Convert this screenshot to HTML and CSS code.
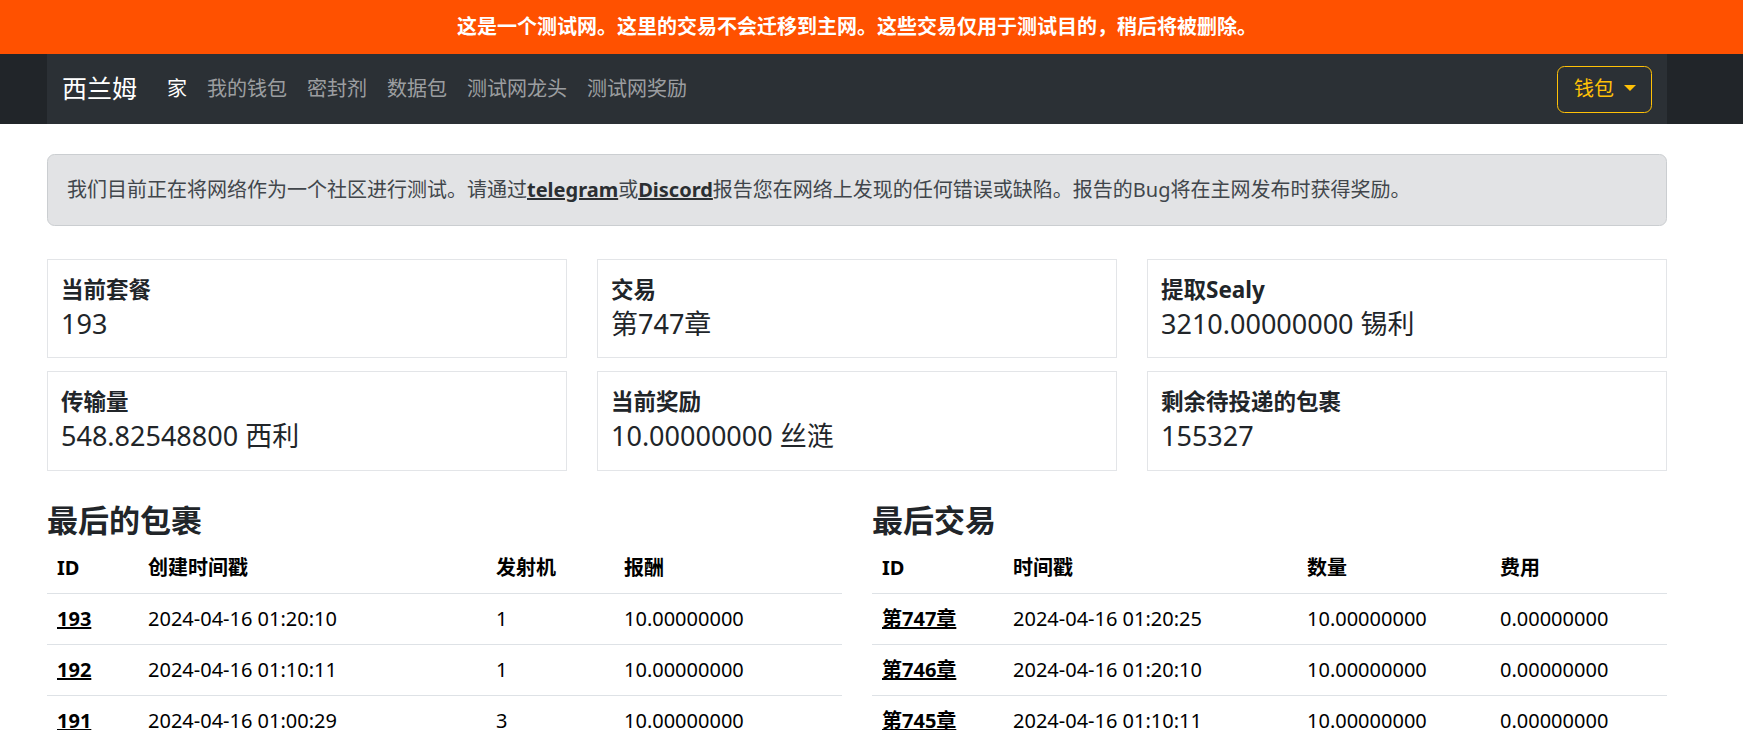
FILE: index.html
```html
<!DOCTYPE html>
<html lang="zh-CN">
<head>
<meta charset="utf-8">
<title>西兰姆</title>
<link rel="stylesheet" href="styles.css">
</head>
<body>
<div class="banner">
  <div class="banner-inner">这是一个测试网。这里的交易不会迁移到主网。这些交易仅用于测试目的，稍后将被删除。</div>
</div>
<nav class="navbar">
  <div class="navbar-inner">
    <a class="brand" href="#">西兰姆</a>
    <ul class="nav">
      <li><a class="nav-link active" href="#">家</a></li>
      <li><a class="nav-link" href="#">我的钱包</a></li>
      <li><a class="nav-link" href="#">密封剂</a></li>
      <li><a class="nav-link" href="#">数据包</a></li>
      <li><a class="nav-link" href="#">测试网龙头</a></li>
      <li><a class="nav-link" href="#">测试网奖励</a></li>
    </ul>
    <button class="wallet-btn" type="button">钱包<span class="caret"></span></button>
  </div>
</nav>
<main class="container">
  <div class="alert">我们目前正在将网络作为一个社区进行测试。请通过<a class="alert-link" href="#">telegram</a>或<a class="alert-link" href="#">Discord</a>报告您在网络上发现的任何错误或缺陷。报告的Bug将在主网发布时获得奖励。</div>

  <div class="stats">
    <div class="stat"><div class="stat-title">当前套餐</div><div class="stat-value">193</div></div>
    <div class="stat"><div class="stat-title">交易</div><div class="stat-value">第747章</div></div>
    <div class="stat"><div class="stat-title">提取Sealy</div><div class="stat-value">3210.00000000 锡利</div></div>
    <div class="stat"><div class="stat-title">传输量</div><div class="stat-value">548.82548800 西利</div></div>
    <div class="stat"><div class="stat-title">当前奖励</div><div class="stat-value">10.00000000 丝涟</div></div>
    <div class="stat"><div class="stat-title">剩余待投递的包裹</div><div class="stat-value">155327</div></div>
  </div>

  <div class="lists">
    <section class="list">
      <h3 class="list-title">最后的包裹</h3>
      <table class="table">
        <colgroup>
          <col class="c-pid"><col class="c-ptime"><col class="c-emit"><col class="c-reward">
        </colgroup>
        <thead>
          <tr><th>ID</th><th>创建时间戳</th><th>发射机</th><th>报酬</th></tr>
        </thead>
        <tbody>
          <tr><td><a class="cell-link" href="#">193</a></td><td>2024-04-16 01:20:10</td><td>1</td><td>10.00000000</td></tr>
          <tr><td><a class="cell-link" href="#">192</a></td><td>2024-04-16 01:10:11</td><td>1</td><td>10.00000000</td></tr>
          <tr><td><a class="cell-link" href="#">191</a></td><td>2024-04-16 01:00:29</td><td>3</td><td>10.00000000</td></tr>
        </tbody>
      </table>
    </section>
    <section class="list">
      <h3 class="list-title">最后交易</h3>
      <table class="table">
        <colgroup>
          <col class="c-tid"><col class="c-ttime"><col class="c-amount"><col class="c-fee">
        </colgroup>
        <thead>
          <tr><th>ID</th><th>时间戳</th><th>数量</th><th>费用</th></tr>
        </thead>
        <tbody>
          <tr><td><a class="cell-link" href="#">第747章</a></td><td>2024-04-16 01:20:25</td><td>10.00000000</td><td>0.00000000</td></tr>
          <tr><td><a class="cell-link" href="#">第746章</a></td><td>2024-04-16 01:20:10</td><td>10.00000000</td><td>0.00000000</td></tr>
          <tr><td><a class="cell-link" href="#">第745章</a></td><td>2024-04-16 01:10:11</td><td>10.00000000</td><td>0.00000000</td></tr>
        </tbody>
      </table>
    </section>
  </div>
</main>
</body>
</html>
```

FILE: styles.css
```css
* {
  box-sizing: border-box;
}

html, body {
  margin: 0;
  padding: 0;
}

body {
  background: #ffffff;
  color: #212529;
  font-family: "Noto Sans", "Noto Sans CJK SC", sans-serif;
  font-size: 20px;
  line-height: 1.5;
}

a {
  text-decoration: none;
}

/* ---------- testnet banner ---------- */
.banner {
  background: #ff5100;
  height: 54px;
  display: flex;
  align-items: center;
}

.banner-inner {
  width: 1620px;
  margin-left: 47px;
  text-align: center;
  color: #ffffff;
  font-weight: 700;
  font-size: 20px;
  line-height: 1;
}

/* ---------- navbar ---------- */
.navbar {
  background: #212529;
}

.navbar-inner {
  width: 1620px;
  margin-left: 47px;
  height: 70px;
  background: #2b3035;
  padding: 0 15px;
  display: flex;
  align-items: center;
}

.brand {
  color: #ffffff;
  font-size: 25px;
  line-height: 1.5;
  margin-right: 20px;
}

.nav {
  list-style: none;
  margin: 0;
  padding: 0;
  display: flex;
  flex: 1;
}

.nav-link {
  display: block;
  padding: 0 10px;
  color: rgba(255, 255, 255, 0.55);
  font-size: 20px;
}

.nav-link.active {
  color: #ffffff;
}

.wallet-btn {
  display: inline-flex;
  align-items: center;
  height: 47px;
  padding: 0 15px 0 16px;
  background: transparent;
  border: 1px solid #ffc107;
  border-radius: 7.5px;
  color: #ffc107;
  font-family: inherit;
  font-size: 20px;
  line-height: 1.5;
}

.caret {
  display: inline-block;
  margin-left: 10px;
  margin-top: -2px;
  width: 0;
  height: 0;
  border-top: 6px solid #ffc107;
  border-left: 6px solid transparent;
  border-right: 6px solid transparent;
}

/* ---------- main ---------- */
.container {
  width: 1620px;
  margin-left: 47px;
  padding-top: 30px;
}

.alert {
  background: #e2e3e5;
  border: 1px solid #cbced1;
  border-radius: 7.5px;
  color: #41464b;
  padding: 20px 19px;
  margin-bottom: 33px;
}

.alert-link {
  color: #2b2f32;
  font-weight: 700;
  text-decoration: underline;
}

/* ---------- stats ---------- */
.stats {
  display: grid;
  grid-template-columns: repeat(3, 1fr);
  column-gap: 30px;
  row-gap: 13px;
}

.stat {
  border: 1px solid #e3e5e8;
  padding: 16px 13px 13px;
}

.stat-title {
  font-size: 22.5px;
  font-weight: 700;
  line-height: 1.2;
}

.stat-value {
  font-size: 27px;
  line-height: 1.53;
}

/* ---------- lists ---------- */
.lists {
  display: grid;
  grid-template-columns: 1fr 1fr;
  column-gap: 30px;
  margin-top: 31px;
}

.list-title {
  margin: 0 0 4px;
  font-size: 31px;
  font-weight: 700;
  line-height: 1.2;
  color: #212529;
}

.table {
  width: 100%;
  border-collapse: collapse;
  table-layout: fixed;
  color: #000000;
}

.table th,
.table td {
  padding: 10px;
  text-align: left;
  border-bottom: 1px solid #dee2e6;
  white-space: nowrap;
}

.table th {
  font-weight: 700;
}

.cell-link {
  color: #000000;
  font-weight: 700;
  text-decoration: underline;
}

.c-pid { width: 91px; }
.c-ptime { width: 348px; }
.c-emit { width: 128px; }
.c-reward { width: auto; }

.c-tid { width: 131px; }
.c-ttime { width: 294px; }
.c-amount { width: 193px; }
.c-fee { width: auto; }
```
